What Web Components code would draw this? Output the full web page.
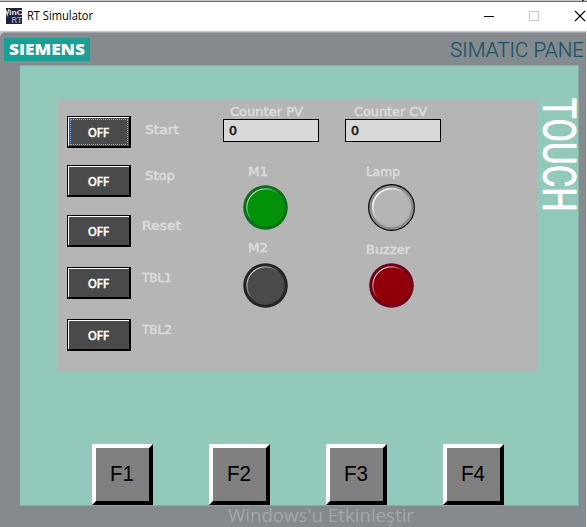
<!DOCTYPE html>
<html lang="tr"><head><meta charset="utf-8"><title>RT Simulator</title>
<style>html,body{margin:0;width:587px;height:527px;overflow:hidden;background:#fff}body{font-family:"Liberation Sans",sans-serif}</style></head>
<body><rt-window></rt-window>
<script>
const define=(name,html)=>customElements.define(name,class extends HTMLElement{
  connectedCallback(){
    if(this.shadowRoot)return;
    const t=document.createElement('template');
    t.innerHTML=typeof html==='function'?html(this):html;
    this.attachShadow({mode:'open'}).append(t.content.cloneNode(true));
  }
});

// A line of text set to an exact width; the box bottom is the baseline.
define('fit-text',e=>{
  const w=+e.getAttribute('w'),h=+e.getAttribute('h')||9;
  return `<style>:host{display:block;width:${w}px;height:${h}px;flex:none}svg{display:block;overflow:visible}text{fill:currentColor;stroke:currentColor;stroke-width:var(--weight,0);font-family:inherit;font-size:inherit;font-weight:inherit}</style>
  <svg width="${w}" height="${h}"><text x="0" y="${h}" textLength="${w}" lengthAdjust="spacingAndGlyphs">${e.textContent}</text></svg>`;
});

define('title-bar',`<style>
:host{display:flex;height:28px;border-top:1px solid #696969;background:#fff;padding:1px 1px 0 6px;align-items:flex-start;color:#000;font:13px "Open Sans","Noto Sans",sans-serif}
.app{margin-top:5px;display:block;overflow:hidden}fit-text{margin:8px 0 0 5px}
.ctl{margin:7px 0 0 auto;display:block}</style>
<svg class="app" width="16" height="16" viewBox="0 0 16 16"><rect width="16" height="16" fill="#20233a"/>
<path d="M0 2l1.2 5L3 1" fill="none" stroke="#e0e2e8" stroke-width="1.1"/>
<g font-family="Liberation Sans" font-weight="700"><text x="3" y="7.4" font-size="8" fill="#e0e2e8" textLength="14" lengthAdjust="spacingAndGlyphs">inC</text><text x="5.5" y="15.4" font-size="9" fill="#8c9fd2" textLength="10.5" lengthAdjust="spacingAndGlyphs">RT</text></g></svg>
<fit-text w="66" h="9">RT Simulator</fit-text>
<svg class="ctl" width="102" height="12" viewBox="484 10 102 12" shape-rendering="crispEdges"><path d="M484 16.5h10" stroke="#000"/><rect x="529.5" y="11.5" width="9" height="9" fill="none" stroke="#ccc"/><path d="M575 11l10 10M585 11l-10 10" stroke="#000" stroke-width="1.1" shape-rendering="auto"/></svg>`);

define('toggle-button',`<style>
:host{display:block;width:64px;height:32px;box-sizing:border-box;border:solid #000;border-width:1px 2px 2px 1px;flex:none}
.f{box-sizing:border-box;width:61px;height:29px;border:solid #fff;border-width:1px 0 0 1px;background:#4a4a4a;padding:1px;color:#fff;font:12px "DejaVu Sans",sans-serif;--weight:.6px}
.i{box-sizing:border-box;width:58px;height:26px;border:1px solid transparent;display:flex;padding:8px 0 0 17px}
:host([focused]) .i{border:1px dotted #85aee8;border-top-color:#c5a478;border-right-color:#c5a478}
</style><div class="f"><div class="i"><fit-text w="21.5">OFF</fit-text></div></div>`);

define('value-field',`<style>:host{display:block;box-sizing:border-box;width:96px;height:23px;border:1px solid #000;background:#d9d9d9;padding:6px 0 0 5px;color:#181818;font:12px "DejaVu Sans",sans-serif;--weight:.6px}</style><fit-text w="8">0</fit-text>`);

define('pilot-lamp',e=>{
 const [fill,rim]=e.getAttribute('colors').split(',');const lamp=e.hasAttribute('outlined');
 return `<style>:host{display:block;width:48px;height:48px}svg{display:block}</style>
 <svg width="48" height="48" viewBox="-24.5 -24.5 48 48"><defs><linearGradient id="g" x1="0" y1="0" x2="1" y2="1"><stop offset=".12" stop-color="${lamp?'#fff':'#d8d8d8'}"/><stop offset=".5" stop-color="${lamp?'#b0b0b0':fill}"/><stop offset="1" stop-color="${lamp?'#b0b0b0':fill}"/></linearGradient></defs>
 <circle r="${lamp?22.9:22.3}" fill="${rim}" ${lamp?'stroke="#000" stroke-width="1.1"':''}/>
 <circle r="${lamp?18.8:18.6}" fill="${fill}" stroke="url(#g)" stroke-width="${lamp?1.8:1.2}"/></svg>`});

define('hmi-screen',`<style>
:host{display:flex;box-sizing:border-box;width:480px;height:272px;background:#b5b5b5;padding-left:9px;color:#dcdcdc;font:12.4px "DejaVu Sans",sans-serif;--weight:.5px}
.col{display:flex;flex-direction:column}
.buttons{width:64px;padding-top:17px}
.names{width:80px;padding:26px 0 0 11px;box-sizing:border-box}
.m1{width:122px}.m2{width:96px}
toggle-button:nth-child(2){margin-top:17px}toggle-button:nth-child(3){margin-top:18px}toggle-button:nth-child(n+4){margin-top:20px}
.names :nth-child(2){margin-top:37px}.names :nth-child(3){margin-top:41px}.names :nth-child(n+4){margin-top:43px}
.names :nth-child(-n+2){margin-left:3px}
.col>fit-text:first-child{margin-top:8px}
value-field{margin-top:3px}
</style>
<div class="col buttons"><toggle-button focused></toggle-button><toggle-button></toggle-button><toggle-button></toggle-button><toggle-button></toggle-button><toggle-button></toggle-button></div>
<div class="col names"><fit-text w="34" style="margin-top:0">Start</fit-text><fit-text w="30">Stop</fit-text><fit-text w="39">Reset</fit-text><fit-text w="30">TBL1</fit-text><fit-text w="30">TBL2</fit-text></div>
<div class="col m1" style="padding-left:12px"><fit-text w="73" style="margin-left:7px">Counter PV</fit-text><value-field></value-field>
<fit-text w="20" style="margin:25px 0 0 25px">M1</fit-text><pilot-lamp colors="#04910a,#087018" style="margin:7px 0 0 18px"></pilot-lamp>
<fit-text w="20" style="margin:12px 0 0 25px">M2</fit-text><pilot-lamp colors="#4a4a4a,#242424" style="margin:9px 0 0 18px"></pilot-lamp></div>
<div class="col m2"><fit-text w="73" style="margin-left:9px;">Counter CV</fit-text><value-field></value-field>
<fit-text w="34" style="margin:25px 0 0 21px">Lamp</fit-text><pilot-lamp outlined colors="#b5b5b5,#8c8c8c" style="margin:7px 0 0 22px"></pilot-lamp>
<fit-text w="44" style="margin:14px 0 0 21px">Buzzer</fit-text><pilot-lamp colors="#910009,#70001a" style="margin:7px 0 0 22px"></pilot-lamp></div>`);

define('function-key',e=>`<style>:host{display:block;box-sizing:border-box;width:61px;height:61px;border:4px solid;border-color:#fff #000 #000 #fff;background:#808080;color:#000;font:21.5px "Liberation Sans",sans-serif}fit-text{margin:18px 0 0 14px}</style><fit-text w="24" h="15">${e.textContent}</fit-text>`);

define('touch-panel',`<style>
:host{display:block;box-sizing:border-box;width:586px;height:495px;background:#858a8e;border-top:1px solid #a2a5a7;border-top-left-radius:5px;overflow:hidden}
header{display:flex;height:32px;justify-content:space-between;padding:5px 2px 0 4px;box-sizing:border-box}
.logo{background:#18a095;width:86px;height:23px;color:#fff;font:800 15.8px "Open Sans",sans-serif;box-sizing:border-box;padding:5px 0 0 5px}
.name{color:#1a5266;font:300 21px Roboto,"Liberation Sans",sans-serif;padding-top:4px;--weight:.2px}
.face{box-sizing:border-box;width:559px;height:441px;margin-left:20px;background:#93c9bb;border:1px solid #82b0a6;border-left:0;padding:33px 0 0 38px}
.row{display:flex}.touch{display:block;overflow:visible;margin-left:5px}
.keys{display:flex;gap:56px;margin:73px 0 0 34px}
footer{display:flex;padding:2px 0 0 228px;color:#a3a6a8;font:19px "Open Sans","Noto Sans",sans-serif}
</style>
<header><div class="logo"><fit-text w="76" h="12">SIEMENS</fit-text></div><div class="name"><fit-text w="134" h="15">SIMATIC PANE</fit-text></div></header>
<div class="face"><div class="row"><hmi-screen></hmi-screen>
<svg class="touch" width="33" height="111"><text transform="translate(0 -1) rotate(90)" x="0" y="0" textLength="114" lengthAdjust="spacingAndGlyphs" fill="#fff" stroke="#fff" stroke-width=".7" font-family="Roboto" font-size="45.5">TOUCH</text></svg></div>
<div class="keys"><function-key>F1</function-key><function-key>F2</function-key><function-key>F3</function-key><function-key>F4</function-key></div></div>
<footer><fit-text w="186" h="14">Windows'u Etkinleştir</fit-text></footer>`);

define('rt-window',`<style>:host{display:block;width:587px;height:527px}
.edge{height:1px;background:linear-gradient(90deg,#c9c9c9 582px,#333 582px 584px,#c9c9c9 584px)}
.b{background:linear-gradient(#c6c8c9 4px,#fff 8px);width:586px;padding-top:1px;height:495px}</style>
<div class="edge"></div><title-bar></title-bar><div class="b"><touch-panel></touch-panel></div>`);
</script></body></html>
